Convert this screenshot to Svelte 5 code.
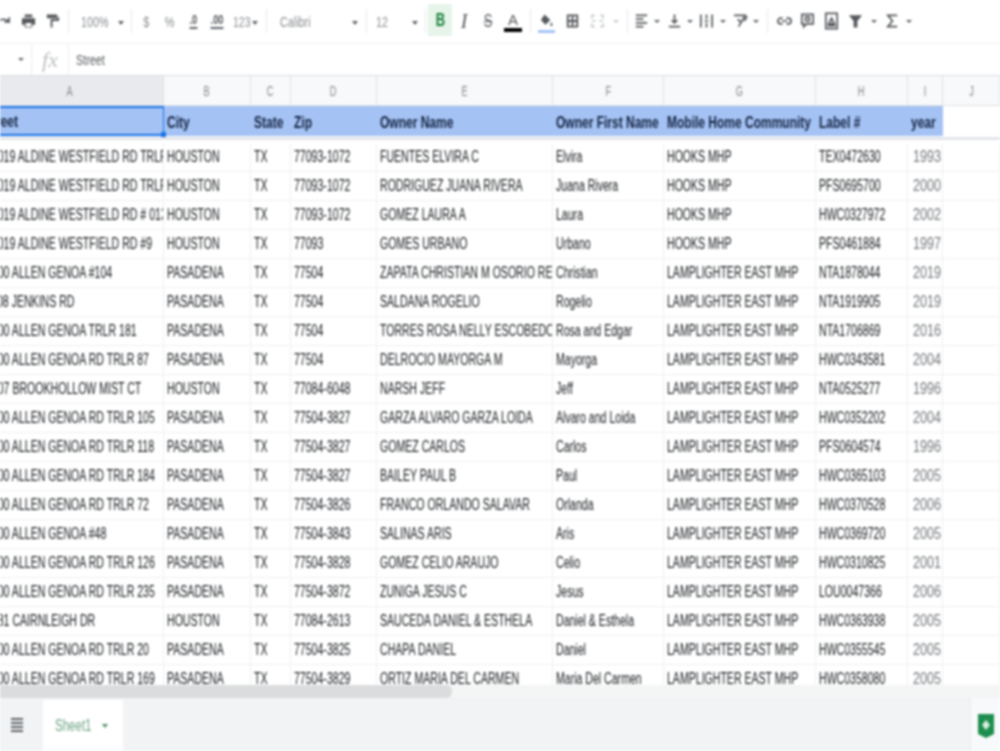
<script lang="ts">
	// widths of the toolbar slots, left to right, so each control lands on its place
	const tools = [
		{ w: 24, icon: 'M2 11c1-4 7-5 11-2M14 5v5h-5', stroke: true },
		{ w: 24, icon: 'M5 2h8v3H5zM2 6h14v7h-3v3H5v-3H2zM6 11h6v4H6z', evenodd: true },
		{ w: 24, icon: 'M3 2h11v3h2v4H9v7H7V7h7V6H3z' },
		{ w: 8, sep: true },
		{ w: 56, label: '100%', caret: true, pad: 9, muted: true },
		{ w: 6, sep: true },
		{ w: 24, label: '$', center: true, muted: true },
		{ w: 24, label: '%', center: true, muted: true },
		{ w: 23, label: '.0', center: true, under: true },
		{ w: 24, label: '.00', center: true, under: true },
		{ w: 33, label: '123', caret: true, pad: 4, muted: true, tight: true },
		{ w: 8, sep: true },
		{ w: 92, label: 'Calibri', caret: true, pad: 10, muted: true },
		{ w: 8, sep: true },
		{ w: 52, label: '12', caret: true, pad: 6, muted: true },
		{ w: 6, sep: true },
		{ w: 24, label: 'B', center: true, bold: true },
		{ w: 24, label: 'I', center: true, italic: true },
		{ w: 24, label: 'S', center: true, strike: true },
		{ w: 26, label: 'A', center: true, color: '#000' },
		{ w: 8, sep: true },
		{ w: 25, icon: 'M7 2l6 6-5 5-5-5zM14 10c1 2 2 3 1 4s-2 0-2-1z', color: '#a4c2f4' },
		{ w: 26, icon: 'M3 2h12v14H3zM5 4v4h3V4zM10 4v4h3V4zM5 10v4h3v-4zM10 10v4h3v-4z', evenodd: true },
		{ w: 25, icon: 'M3 3h3M12 3h3M3 15h3M12 15h3M3 3v3M15 3v3M3 12v3M15 12v3M3 9h4M11 9h4', stroke: true, faint: true },
		{ w: 12, caretOnly: true, faint: true },
		{ w: 10, sep: true },
		{ w: 18, icon: 'M3 3h12M3 7h8M3 11h12M3 15h8', stroke: true },
		{ w: 14, caretOnly: true },
		{ w: 20, icon: 'M9 2v9M6 8l3 3 3-3M3 15h12', stroke: true },
		{ w: 12, caretOnly: true },
		{ w: 21, icon: 'M3 2v14M15 2v14M9 2v5M9 11v5M7 9h4', stroke: true },
		{ w: 12, caretOnly: true },
		{ w: 22, icon: 'M2 3h12L7 15M6 7l4 4M13 9l3-5', stroke: true },
		{ w: 10, caretOnly: true },
		{ w: 12, sep: true },
		{ w: 22, icon: 'M7 6H5a3 3 0 0 0 0 6h2M11 6h2a3 3 0 0 1 0 6h-2M6 9h6', stroke: true },
		{ w: 24, icon: 'M3 2h12v10H8l-3 3v-3H3zM7 5h4v4H7z', stroke: true },
		{ w: 24, icon: 'M3 1h12v16H3zM6 12l3-6 3 6zM5 14h8', stroke: true },
		{ w: 25, icon: 'M2 3h14l-5 6v7H7V9z' },
		{ w: 12, caretOnly: true },
		{ w: 24, icon: 'M14 3H4l5 6-5 6h10', stroke: true },
		{ w: 10, caretOnly: true }
	];

	const columns = ['A', 'B', 'C', 'D', 'E', 'F', 'G', 'H', 'I', 'J'];
	const headers = ['Street', 'City', 'State', 'Zip', 'Owner Name', 'Owner First Name', 'Mobile Home Community', 'Label #', 'year'];

	const HOOKS = 'HOOKS MHP';
	const LAMP = 'LAMPLIGHTER EAST MHP';
	const PAS = 'PASADENA';
	const HOU = 'HOUSTON';
	const GENOA = '2500 ALLEN GENOA RD TRLR ';

	const rows = [
		['10019 ALDINE WESTFIELD RD TRLR 64', HOU, '77093-1072', 'FUENTES ELVIRA C', 'Elvira', HOOKS, 'TEX0472630', '1993'],
		['10019 ALDINE WESTFIELD RD TRLR 87', HOU, '77093-1072', 'RODRIGUEZ JUANA RIVERA', 'Juana Rivera', HOOKS, 'PFS0695700', '2000'],
		['10019 ALDINE WESTFIELD RD # 013', HOU, '77093-1072', 'GOMEZ LAURA A', 'Laura', HOOKS, 'HWC0327972', '2002'],
		['10019 ALDINE WESTFIELD RD #9', HOU, '77093', 'GOMES URBANO', 'Urbano', HOOKS, 'PFS0461884', '1997'],
		['2500 ALLEN GENOA #104', PAS, '77504', 'ZAPATA CHRISTIAN M OSORIO REYES', 'Christian', LAMP, 'NTA1878044', '2019'],
		['1108 JENKINS RD', PAS, '77504', 'SALDANA ROGELIO', 'Rogelio', LAMP, 'NTA1919905', '2019'],
		['2500 ALLEN GENOA TRLR 181', PAS, '77504', 'TORRES ROSA NELLY ESCOBEDO E', 'Rosa and Edgar', LAMP, 'NTA1706869', '2016'],
		[GENOA + '87', PAS, '77504', 'DELROCIO MAYORGA M', 'Mayorga', LAMP, 'HWC0343581', '2004'],
		['1807 BROOKHOLLOW MIST CT', HOU, '77084-6048', 'NARSH JEFF', 'Jeff', LAMP, 'NTA0525277', '1996'],
		[GENOA + '105', PAS, '77504-3827', 'GARZA ALVARO GARZA LOIDA', 'Alvaro and Loida', LAMP, 'HWC0352202', '2004'],
		[GENOA + '118', PAS, '77504-3827', 'GOMEZ CARLOS', 'Carlos', LAMP, 'PFS0604574', '1996'],
		[GENOA + '184', PAS, '77504-3827', 'BAILEY PAUL B', 'Paul', LAMP, 'HWC0365103', '2005'],
		[GENOA + '72', PAS, '77504-3826', 'FRANCO ORLANDO SALAVAR', 'Orlanda', LAMP, 'HWC0370528', '2006'],
		['2500 ALLEN GENOA #48', PAS, '77504-3843', 'SALINAS ARIS', 'Aris', LAMP, 'HWC0369720', '2005'],
		[GENOA + '126', PAS, '77504-3828', 'GOMEZ CELIO ARAUJO', 'Celio', LAMP, 'HWC0310825', '2001'],
		[GENOA + '235', PAS, '77504-3872', 'ZUNIGA JESUS C', 'Jesus', LAMP, 'LOU0047366', '2006'],
		['1581 CAIRNLEIGH DR', HOU, '77084-2613', 'SAUCEDA DANIEL & ESTHELA', 'Daniel & Esthela', LAMP, 'HWC0363938', '2005'],
		[GENOA + '20', PAS, '77504-3825', 'CHAPA DANIEL', 'Daniel', LAMP, 'HWC0355545', '2005'],
		[GENOA + '169', PAS, '77504-3829', 'ORTIZ MARIA DEL CARMEN', 'Maria Del Carmen', LAMP, 'HWC0358080', '2005']
	].map(([street, city, zip, owner, first, park, label, year]) => [street, city, 'TX', zip, owner, first, park, label, year, '']);
</script>

<div class="app">
	<div class="toolbar">
		{#each tools as t}
			<div
				class="tool"
				class:center={t.center || t.icon || t.caretOnly}
				class:faint={t.faint}
				class:muted={t.muted}
				class:active={t.bold}
				style="width:{t.w}px;padding-left:{t.pad ?? 0}px"
			>
				{#if t.sep}
					<i class="sep"></i>
				{:else if t.icon}
					<svg viewBox="0 0 18 18" class="icon">
						{#if t.stroke}
							<path d={t.icon} fill="none" stroke="currentColor" stroke-width="1.8" />
						{:else}
							<path d={t.icon} fill="currentColor" fill-rule={t.evenodd ? 'evenodd' : 'nonzero'} />
						{/if}
					</svg>
					{#if t.color}<b class="swatch"></b>{/if}
				{:else if t.caretOnly}
					<i class="caret small"></i>
				{:else}
					<span
						class="label"
						class:bold={t.bold}
						class:italic={t.italic}
						class:strike={t.strike}
						class:under={t.under}
						class:ink={t.color}
						class:tight={t.tight}>{t.label}</span
					>
					{#if t.caret}<i class="caret push"></i>{/if}
				{/if}
			</div>
		{/each}
	</div>

	<div class="formula">
		<div class="namebox"><i class="caret small"></i></div>
		<div class="fx">fx</div>
		<div class="value"><span>Street</span></div>
	</div>

	<div class="sheet">
		<div class="line colheads">
			{#each columns as c, i}
				<div class="colhead" class:picked={i === 0}><span>{c}</span></div>
			{/each}
		</div>

		<div class="line titles">
			{#each headers as h, i}
				<div class="title" class:selected={i === 0}><span>{h}</span></div>
			{/each}
			<div class="title blank"></div>
		</div>
		<div class="freeze"></div>

		{#each rows as row}
			<div class="line row">
				{#each row as text, i}
					<div class="cell" class:street={i === 0} class:year={i === 8}><span>{text}</span></div>
				{/each}
			</div>
		{/each}
	</div>

	<div class="scrollbar"><div class="thumb"></div></div>

	<div class="tabs">
		<div class="menu">
			<svg viewBox="0 0 12 14" width="12" height="14"><path d="M0 1h12M0 5h12M0 9h12M0 13h12" stroke="#5f6368" stroke-width="2" /></svg>
		</div>
		<div class="tab"><span>Sheet1</span><i class="caret green"></i></div>
		<div class="explore">
			<svg viewBox="0 0 16 26" width="16" height="26">
				<path d="M0 1h16v20l-8 4-8-4z" fill="#1e8e4e" />
				<path d="M8 7l4 5-4 5-4-5z" fill="#d6f0e0" />
			</svg>
		</div>
	</div>
</div>

<style>
	:global(body) {
		margin: 0;
		background: #fff;
	}
	.app {
		width: 1000px;
		height: 751px;
		display: flex;
		flex-direction: column;
		overflow: hidden;
		font-family: 'Liberation Sans', Arial, sans-serif;
		color: #3c4043;
		filter: blur(0.8px);
	}

	.toolbar {
		height: 44px;
		flex: none;
		display: flex;
		margin-left: -8px;
		padding-bottom: 5px;
		box-sizing: border-box;
		border-bottom: 1px solid #f0f0f0;
		color: #55585c;
	}
	.tool {
		flex: none;
		height: 100%;
		box-sizing: border-box;
		display: flex;
		align-items: center;
		position: relative;
		padding-top: 4px;
		font-size: 15px;
	}
	.tool.center {
		justify-content: center;
	}
	.tool.muted {
		color: #8a8d91;
	}
	.tool.faint {
		color: #c4c7ca;
	}
	.tool.active {
		background: #e6f4ea;
		color: #188038;
		margin-top: 4px;
		height: 32px;
		padding-top: 0;
	}
	.icon {
		width: 17px;
		height: 20px;
	}
	.sep {
		display: block;
		width: 1px;
		height: 24px;
		margin: 0 auto;
		background: #e8eaed;
	}
	.label {
		display: inline-block;
		transform: scaleX(0.72);
		transform-origin: 0 50%;
		font-size: 15px;
	}
	.center .label {
		transform-origin: 50% 50%;
	}
	.label.tight {
		transform: scaleX(0.7);
	}
	.label.bold {
		font-weight: 700;
		font-size: 18px;
	}
	.label.italic {
		font-family: 'Liberation Serif', serif;
		font-style: italic;
		font-size: 20px;
		transform: none;
	}
	.label.strike {
		text-decoration: line-through;
		font-size: 18px;
	}
	.label.under {
		border-bottom: 2px solid #5f6368;
		line-height: 14px;
		font-weight: 700;
		font-size: 13px;
	}
	.label.ink {
		width: 18px;
		text-align: center;
		transform: none;
		border-bottom: 4px solid #000;
		line-height: 17px;
		font-size: 15px;
	}
	.swatch {
		position: absolute;
		left: 4px;
		right: 4px;
		bottom: 5px;
		height: 3px;
		background: #a4c2f4;
	}
	.caret {
		display: block;
		width: 0;
		height: 0;
		border-left: 3.5px solid transparent;
		border-right: 3.5px solid transparent;
		border-top: 4px solid #5f6368;
	}
	.caret.small {
		border-left-width: 3px;
		border-right-width: 3px;
		border-top-width: 3px;
	}
	.faint .caret {
		border-top-color: #c4c7ca;
	}
	.caret.push {
		position: absolute;
		right: 4px;
		top: 21px;
	}

	.formula {
		height: 32px;
		flex: none;
		display: flex;
		align-items: center;
		border-bottom: 1px solid #dadce0;
		box-sizing: border-box;
		font-size: 15px;
	}
	.namebox {
		width: 32px;
		height: 100%;
		display: flex;
		align-items: center;
		justify-content: flex-end;
		padding-right: 7px;
		box-sizing: border-box;
		border-right: 1px solid #eceded;
	}
	.fx {
		width: 37px;
		height: 100%;
		box-sizing: border-box;
		border-right: 1px solid #eceded;
		display: flex;
		align-items: center;
		justify-content: center;
		font-family: 'Liberation Serif', serif;
		font-style: italic;
		font-size: 22px;
		color: #bcbfc3;
	}
	.value {
		padding-left: 7px;
	}
	.value span {
		display: inline-block;
		transform: scaleX(0.72);
		transform-origin: 0 50%;
		color: #55585c;
	}

	.sheet {
		flex: 1;
		min-height: 0;
		overflow: hidden;
		margin-left: -23px;
	}
	.line {
		display: grid;
		grid-template-columns: 187px 87px 40px 86px 176px 111px 152px 92px 35px 57px;
	}
	.line > div {
		overflow: hidden;
		white-space: nowrap;
		box-sizing: border-box;
		min-width: 0;
	}
	.line span {
		display: inline-block;
		transform: scaleX(0.66);
		transform-origin: 0 50%;
	}

	.colheads {
		height: 30px;
		background: #f8f9fa;
	}
	.colhead {
		display: flex;
		align-items: center;
		justify-content: center;
		border-right: 1px solid #dfe1e3;
		border-bottom: 1px solid #dfe1e3;
		font-size: 14px;
		color: #85888c;
	}
	.colhead span {
		transform-origin: 50% 50%;
	}
	.colhead.picked {
		background: #e8eaed;
	}

	.titles {
		height: 30px;
		position: relative;
	}
	.title {
		background: #a4c2f4;
		padding: 3px 0 0 3px;
		display: flex;
		align-items: center;
		font-size: 16px;
		font-weight: 700;
		color: #14233f;
	}
	.line .title span {
		transform: scaleX(0.75);
	}
	.title.blank {
		background: #fff;
	}
	.title.selected {
		border: 2px solid #1a73e8;
		border-right-width: 1px;
		padding: 1px 0 0 5px;
		position: relative;
		overflow: visible;
	}
	.title.selected::after {
		content: '';
		position: absolute;
		right: -3px;
		bottom: -3px;
		width: 5px;
		height: 5px;
		background: #1a73e8;
	}
	.freeze {
		height: 7px;
		background: linear-gradient(#fff 14%, #e2e5ea 14%, #e2e5ea 60%, #fff 60%);
	}

	.row {
		height: 29px;
	}
	.cell {
		display: flex;
		align-items: center;
		padding-left: 3px;
		border-right: 1px solid #f1f1f1;
		border-bottom: 1px solid #f1f1f1;
		font-size: 16px;
		color: #14171a;
	}
	.cell.street {
		padding-left: 9px;
	}
	.cell.year {
		padding-left: 5px;
		color: #74777b;
		font-size: 17px;
	}
	.line .cell.year span {
		transform: scaleX(0.74);
	}

	.scrollbar {
		height: 13px;
		flex: none;
		background: #f4f5f5;
	}
	.thumb {
		width: 452px;
		height: 100%;
		border-radius: 0 6px 6px 0;
		background: #dadcde;
	}

	.tabs {
		height: 53px;
		flex: none;
		display: flex;
		background: #f1f3f4;
	}
	.menu {
		width: 34px;
		margin-right: 9px;
		display: flex;
		align-items: center;
		justify-content: center;
	}
	.tab {
		width: 80px;
		margin-top: 2px;
		box-sizing: border-box;
		padding-left: 12px;
		display: flex;
		align-items: center;
		gap: 0;
		background: #fff;
		font-size: 16px;
		color: #6ea585;
	}
	.tab span {
		display: inline-block;
		width: 47px;
		transform: scaleX(0.72);
		transform-origin: 0 50%;
		white-space: nowrap;
	}
	.caret.green {
		border-top-color: #4f9068;
	}
	.explore {
		margin-left: auto;
		width: 30px;
		background: #f8f9fa;
		border-left: 1px solid #eceded;
		display: flex;
		justify-content: center;
		padding-top: 15px;
		box-sizing: border-box;
	}
</style>
